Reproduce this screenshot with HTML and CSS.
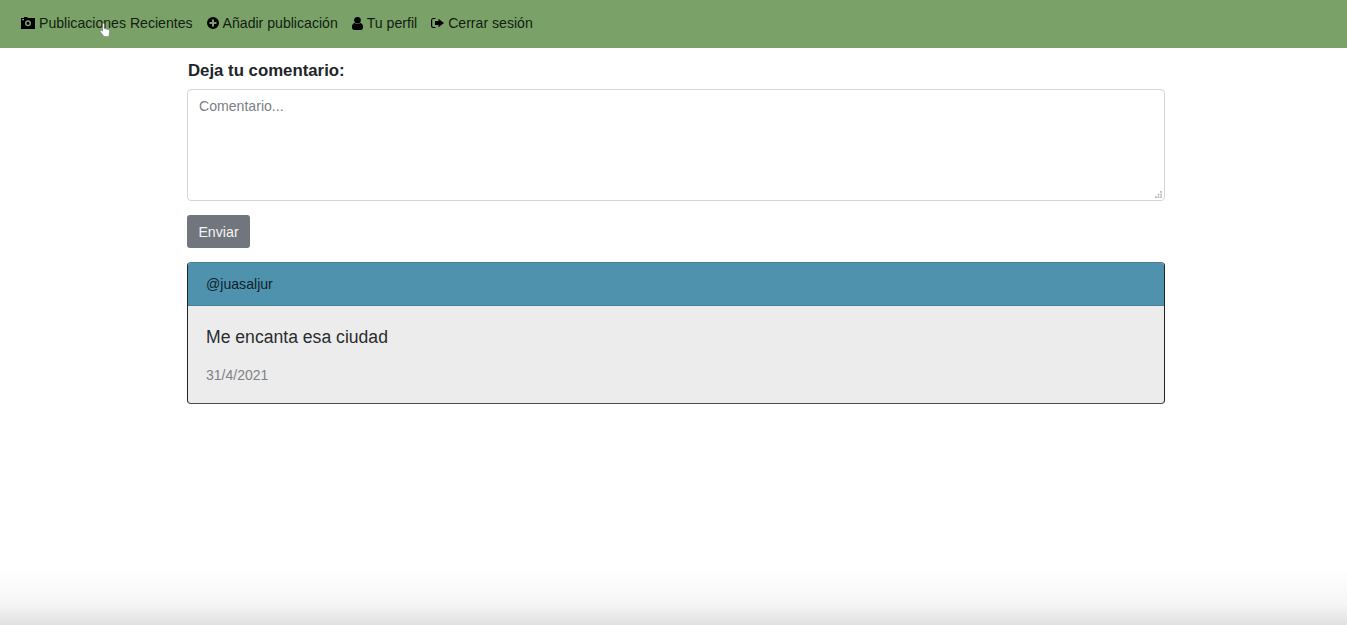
FILE: index.html
```html
<!DOCTYPE html>
<html lang="es">
<head>
<meta charset="utf-8">
<title>Comentarios</title>
<link rel="stylesheet" href="styles.css">
</head>
<body>
<div class="page">
  <nav class="nav">
    <a class="nav-link" href="#">
      <svg class="icon icon-camera" viewBox="0 0 14 12"><path fill-rule="evenodd" d="M0 1h3V0h3.500v1H14v11H0zM7 3.200a3 3 0 1 0 0 6 3 3 0 0 0 0-6zM7 4.700a1.500 1.500 0 1 1 0 3 1.500 1.500 0 0 1 0-3zM1 2v1.200h2V2z"/></svg>
      Publicaciones Recientes
      <svg class="cursor" viewBox="0 0 12 16"><path d="M3.500 1.500c.8-.7 1.800-.2 1.800.8v4.200l4 1c1 .3 1.500 1 1.400 2l-.5 3.500c-.1 1-.8 1.700-1.800 1.700H6c-.8 0-1.400-.4-1.800-1L1.200 9.600c-.5-.8.500-1.800 1.300-1.200l1 .8z" fill="#fff" stroke="#5d6f57" stroke-width=".6"/></svg>
    </a>
    <a class="nav-link" href="#">
      <svg class="icon icon-plus" viewBox="0 0 12 12"><path fill-rule="evenodd" d="M6 0a6 6 0 1 1 0 12A6 6 0 0 1 6 0zM5 2.500v2.500H2.500v2H5v2.500h2V7h2.500V5H7V2.500z"/></svg>
      Añadir publicación
    </a>
    <a class="nav-link" href="#">
      <svg class="icon icon-user" viewBox="0 0 11 13"><circle cx="5.500" cy="3.300" r="3.300"/><path d="M2.700 6c1.600 1.400 4 1.400 5.600 0C10.200 6.300 11 7.800 11 10.200c0 1.700-.9 2.800-2.300 2.800H2.300C.9 13 0 11.900 0 10.200 0 7.800.8 6.300 2.700 6z"/></svg>
      Tu perfil
    </a>
    <a class="nav-link" href="#">
      <svg class="icon" viewBox="0 0 13 12"><path d="M7.500 1.700 13 6 7.500 10.300V8H4V4h3.500z"/><path d="M4.500 1.500H2.200A1.800 1.800 0 0 0 .6 3.300v5.400a1.800 1.800 0 0 0 1.600 1.800h2.300" fill="none" stroke="#000" stroke-width="1.200"/></svg>
      Cerrar sesión
    </a>
  </nav>

  <main class="content">
    <form class="comment-form">
      <label class="form-label" for="comentario">Deja tu comentario:</label>
      <div class="input-wrap">
        <textarea class="form-input" id="comentario" placeholder="Comentario..."></textarea>
        <svg class="grip" viewBox="0 0 8 8"><path d="M6 0h2v2H6zM3 3h2v2H3zM6 3h2v2H6zM0 6h2v2H0zM3 6h2v2H3zM6 6h2v2H6z"/></svg>
      </div>
      <button class="btn" type="button">Enviar</button>
    </form>

    <article class="card">
      <header class="card-header">@juasaljur</header>
      <div class="card-body">
        <p class="card-text">Me encanta esa ciudad</p>
        <p class="card-date">31/4/2021</p>
      </div>
    </article>
  </main>

  <div class="bottom-shade"></div>
</div>
</body>
</html>
```

FILE: styles.css
```css
* {
  box-sizing: border-box;
}

html,
body {
  margin: 0;
  height: 100%;
  overflow: hidden;
  background: #fff;
}

body {
  font-family: "Liberation Sans", Arial, sans-serif;
  color: #212529;
}

.page {
  height: 625px;
  display: flex;
  flex-direction: column;
}

.nav {
  height: 48px;
  flex: none;
  display: flex;
  align-items: center;
  gap: 14px;
  padding: 0 21px 2px;
  background: #7aa268;
}

.nav-link {
  position: relative;
  display: flex;
  align-items: center;
  gap: 4px;
  font-size: 14.100px;
  line-height: 20px;
  color: #14200f;
  text-decoration: none;
}

.icon {
  width: 13px;
  height: 12px;
  flex: none;
  fill: #000;
}

.icon-camera {
  width: 14px;
}

.icon-plus {
  width: 12px;
}

.icon-user {
  width: 11px;
  height: 13px;
}

.cursor {
  position: absolute;
  left: 78px;
  top: 9px;
  width: 12px;
  height: 16px;
}

.content {
  width: 978px;
  margin-left: 187px;
  flex: none;
}

.comment-form {
  display: flex;
  flex-direction: column;
  align-items: flex-start;
}

.form-label {
  margin-top: 13px;
  margin-left: 1px;
  font-size: 16.800px;
  line-height: 20px;
  font-weight: 700;
}

.input-wrap {
  position: relative;
  width: 100%;
  height: 112px;
  margin-top: 8px;
}

.form-input {
  display: block;
  width: 100%;
  height: 100%;
  padding: 6px 11px;
  border: 1px solid #d3d6d9;
  border-radius: 4px;
  resize: none;
  font-family: inherit;
  font-size: 14.100px;
  line-height: 20px;
  color: #495057;
  background: #fff;
}

.form-input::placeholder {
  color: #7b8085;
  opacity: 1;
}

.grip {
  position: absolute;
  right: 3px;
  bottom: 3px;
  width: 7px;
  height: 7px;
  fill: #b5b5b5;
}

.btn {
  height: 33px;
  width: 63px;
  margin-top: 14px;
  padding: 0;
  border: 0;
  border-radius: 3px;
  font-family: inherit;
  font-size: 14.200px;
  color: #f2f3f4;
  background: #71767c;
}

.card {
  height: 142px;
  margin-top: 14px;
  border: 1px solid #1c2226;
  border-top-color: #4f7a8d;
  border-bottom-color: #4a4a4a;
  border-radius: 4px;
  overflow: hidden;
  background: #ececed;
}

.card-header {
  height: 43px;
  padding: 0 18px 1px;
  display: flex;
  align-items: center;
  border-bottom: 1px solid #4a7f97;
  font-size: 14.100px;
  color: #0e1f29;
  background: #4f92ae;
}

.card-body {
  padding: 21px 18px 0;
}

.card-text {
  margin: 0;
  font-size: 17.600px;
  line-height: 21px;
  color: #2a2c2e;
}

.card-date {
  margin: 17px 0 0;
  font-size: 14px;
  line-height: 20px;
  color: #808285;
}

.bottom-shade {
  height: 55px;
  margin-top: auto;
  flex: none;
  background: linear-gradient(to bottom, #fff, #f6f6f6 60%, #e1e1e1);
}
```
